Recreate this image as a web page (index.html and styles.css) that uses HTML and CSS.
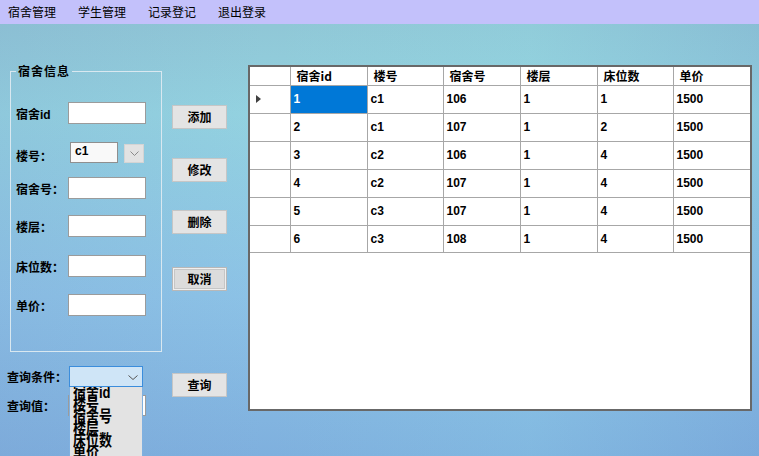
FILE: index.html
```html
<!DOCTYPE html>
<html lang="zh-CN">
<head>
<meta charset="utf-8">
<title>宿舍管理</title>
<link rel="stylesheet" href="styles.css">
</head>
<body>
<div class="menubar">
  <span class="menu-item">宿舍管理</span>
  <span class="menu-item">学生管理</span>
  <span class="menu-item">记录登记</span>
  <span class="menu-item">退出登录</span>
</div>
<div class="main">
  <div class="leftcol">
    <fieldset class="group">
      <legend class="group-title">宿舍信息</legend>
      <div class="row"><span class="lbl">宿舍id</span><div class="tb"></div></div>
      <div class="row"><span class="lbl lbl-combo">楼号：</span><div class="combo">c1</div><div class="combo-btn"><svg width="9" height="5" viewBox="0 0 9 5"><polyline points="0.5,0.5 4.5,4.5 8.5,0.5" fill="none" stroke="#8a8a8a" stroke-width="1"/></svg></div></div>
      <div class="row"><span class="lbl">宿舍号：</span><div class="tb"></div></div>
      <div class="row"><span class="lbl">楼层：</span><div class="tb"></div></div>
      <div class="row"><span class="lbl">床位数：</span><div class="tb"></div></div>
      <div class="row"><span class="lbl">单价：</span><div class="tb"></div></div>
    </fieldset>
    <div class="qrow qrow-cond">
      <span class="qlbl">查询条件：</span>
      <div class="qcombo">
        <svg class="qchev" width="10" height="5" viewBox="0 0 10 5"><polyline points="0.5,0.5 5,4.5 9.5,0.5" fill="none" stroke="#555" stroke-width="1"/></svg>
        <div class="droplist">
          <div class="drop-item">宿舍id</div>
          <div class="drop-item">楼号</div>
          <div class="drop-item">宿舍号</div>
          <div class="drop-item">楼层</div>
          <div class="drop-item">床位数</div>
          <div class="drop-item">单价</div>
        </div>
      </div>
    </div>
    <div class="qrow qrow-val">
      <span class="qlbl">查询值：</span>
      <div class="tb qtb"></div>
    </div>
  </div>
  <div class="btncol">
    <div class="btn">添加</div>
    <div class="btn">修改</div>
    <div class="btn">删除</div>
    <div class="btn btn-focus">取消</div>
    <div class="btn">查询</div>
  </div>
  <div class="gridview">
    <table class="grid">
      <colgroup>
        <col class="c-rh"><col class="c-a"><col class="c-b"><col class="c-a"><col class="c-a"><col class="c-b"><col class="c-a">
      </colgroup>
      <thead>
        <tr><th class="rh"></th><th>宿舍id</th><th>楼号</th><th>宿舍号</th><th>楼层</th><th>床位数</th><th>单价</th></tr>
      </thead>
      <tbody>
        <tr><td class="rh"><svg class="cur" width="5" height="8" viewBox="0 0 5 8"><polygon points="0,0 5,4 0,8" fill="#404040"/></svg></td><td class="sel">1</td><td>c1</td><td>106</td><td>1</td><td>1</td><td>1500</td></tr>
        <tr><td class="rh"></td><td>2</td><td>c1</td><td>107</td><td>1</td><td>2</td><td>1500</td></tr>
        <tr><td class="rh"></td><td>3</td><td>c2</td><td>106</td><td>1</td><td>4</td><td>1500</td></tr>
        <tr><td class="rh"></td><td>4</td><td>c2</td><td>107</td><td>1</td><td>4</td><td>1500</td></tr>
        <tr><td class="rh"></td><td>5</td><td>c3</td><td>107</td><td>1</td><td>4</td><td>1500</td></tr>
        <tr><td class="rh"></td><td>6</td><td>c3</td><td>108</td><td>1</td><td>4</td><td>1500</td></tr>
      </tbody>
    </table>
  </div>
</div>
</body>
</html>
```

FILE: styles.css
```css
* { box-sizing: border-box; }
html, body { margin: 0; padding: 0; }
body {
  width: 759px;
  height: 456px;
  overflow: hidden;
  font-family: "Liberation Sans", "Noto Sans CJK SC", sans-serif;
  font-size: 12px;
  color: #000;
  background:
    linear-gradient(90deg, rgba(110,130,190,0.12) 0%, rgba(255,255,255,0) 35%, rgba(150,240,240,0.12) 70%, rgba(90,130,200,0.12) 100%),
    linear-gradient(180deg, #8fc4d4 0%, #93d2e0 25%, #8cc2e6 65%, #7fb0de 100%);
}

/* menu bar */
.menubar {
  height: 24px;
  background: #c3c1fb;
  display: flex;
  align-items: center;
  gap: 22px;
  padding-left: 8px;
}
.menu-item {
  font-family: "Noto Sans CJK SC", sans-serif;
  font-size: 12px;
  line-height: 16px;
  width: 48px;
}

.main {
  display: flex;
  align-items: flex-start;
}

/* left column */
.leftcol {
  width: 162px;
  padding-left: 7px;
  padding-top: 39px;
  font-weight: bold;
}
.group {
  margin: 0 0 0 3px;
  padding: 0 5px 35px 5px;
  width: 152px;
  border: 1px solid #d9e8f0;
  min-inline-size: 0;
}
.group-title {
  padding: 0 2px;
  margin-left: 0;
  line-height: 16px;
  font-size: 12px;
  letter-spacing: 1px;
  font-family: "Noto Sans CJK SC", sans-serif;
}
.row {
  display: flex;
  align-items: center;
  height: 22px;
}
.row:nth-of-type(1) { margin-top: 23px; }
.row:nth-of-type(2) { margin-top: 18px; align-items: flex-start; }
.row:nth-of-type(3) { margin-top: 13px; }
.row:nth-of-type(4) { margin-top: 16px; }
.row:nth-of-type(5) { margin-top: 18px; }
.row:nth-of-type(6) { margin-top: 17px; }
.lbl {
  width: 52px;
  white-space: nowrap;
}
.lbl-combo {
  width: 54px;
  align-self: center;
  padding-top: 4px;
}
.tb {
  width: 78px;
  height: 22px;
  background: #fff;
  border: 1px solid #9b9b9b;
}
.combo {
  width: 48px;
  height: 21px;
  background: #f9f9f9;
  border: 1px solid #8f8f8f;
  padding: 2px 0 0 4px;
  line-height: 12px;
}
.combo-btn {
  margin-left: 6px;
  margin-top: 2px;
  width: 20px;
  height: 19px;
  background: #e2e2e2;
  border: 1px solid #d4d4d4;
  display: flex;
  align-items: center;
  justify-content: center;
}

/* query */
.qrow {
  display: flex;
  align-items: center;
  height: 21px;
}
.qrow-cond { margin-top: 14px; }
.qrow-val { margin-top: 8px; }
.qlbl {
  width: 62px;
  white-space: nowrap;
}
.qrow-val .qlbl { width: 61px; }
.qcombo {
  position: relative;
  width: 74px;
  height: 21px;
  background: #cfe5f7;
  border: 1px solid #3b8ddc;
  z-index: 2;
}
.qchev {
  position: absolute;
  right: 4px;
  top: 8px;
}
.qtb {
  width: 78px;
  height: 21px;
}
.droplist {
  position: absolute;
  left: -1px;
  top: 20px;
  width: 74px;
  height: 80px;
  background: #e3e3e3;
  border-left: 1px solid #7fb0e0;
  border-right: 1px solid #7fb0e0;
  padding: 0 0 0 3px;
  overflow: hidden;
}
.drop-item {
  font-size: 13px;
  line-height: 12px;
  height: 12px;
  white-space: nowrap;
  transform: scaleY(1.2);
}

/* buttons */
.btncol {
  margin-left: 10px;
  width: 55px;
  display: flex;
  flex-direction: column;
}
.btn {
  width: 55px;
  height: 24px;
  background: #e4e4e4;
  border: 1px solid #c6c6c6;
  font-weight: bold;
  text-align: center;
  line-height: 22px;
  font-family: "Noto Sans CJK SC", sans-serif;
}
.btn:nth-child(1) { margin-top: 81px; }
.btn:nth-child(2) { margin-top: 29px; }
.btn:nth-child(3) { margin-top: 28px; }
.btn:nth-child(4) { margin-top: 33px; }
.btn:nth-child(5) { margin-top: 82px; }
.btn-focus {
  background: #dcdcdc;
  border-color: #b8b8b8;
  box-shadow: inset 0 0 0 1px #efefef, inset 0 0 0 2px #c6c6c6;
}

/* grid */
.gridview {
  margin-left: 21px;
  margin-top: 41px;
  width: 504px;
  height: 346px;
  background: #fff;
  border: 2px solid #686868;
  overflow: hidden;
}
.grid {
  border-collapse: collapse;
  table-layout: fixed;
  width: 500px;
}
.c-rh { width: 40px; }
.c-a { width: 77px; }
.c-b { width: 76px; }
.grid th, .grid td {
  border-right: 1px solid #a7a7a7;
  border-bottom: 1px solid #a7a7a7;
  padding: 0 0 0 3px;
  text-align: left;
  white-space: nowrap;
  overflow: hidden;
  font-weight: bold;
}
.grid th {
  height: 18px;
  padding-left: 6px;
  line-height: 14px;
  font-family: "Noto Sans CJK SC", sans-serif;
  font-size: 12px;
}
.grid td {
  height: 28px;
}
.grid tbody tr:last-child td { height: 27px; }
.grid th:last-child, .grid td:last-child { border-right: none; }
.grid .rh { padding-left: 6px; }
.cur { display: block; }
.grid td.sel {
  background: #0078d7;
  color: #fff;
}
```
